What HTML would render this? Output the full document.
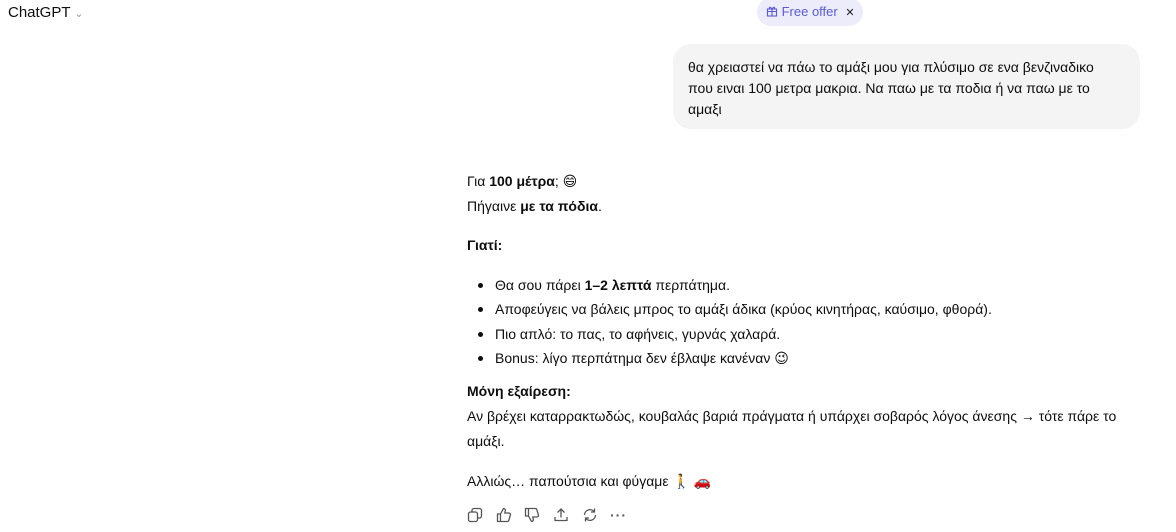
<!DOCTYPE html>
<html><head><meta charset="utf-8"><style>
body{margin:0;width:1176px;height:532px;background:#fff;font-family:"Liberation Sans","DejaVu Sans",sans-serif;color:#0d0d0d;position:relative;overflow:hidden;font-size:14px}
.a{position:absolute;white-space:nowrap;line-height:20px}
b{font-weight:700}
.bul{position:absolute;left:478px;width:5px;height:5px;border-radius:50%;background:#0d0d0d}
.ic{position:absolute;top:507px}
</style></head><body>
<div class="a" style="left:8px;top:2px;font-size:15px;line-height:22px">ChatGPT <span style="color:#999;font-size:11px">&#8964;</span></div>
<div style="position:absolute;left:757px;top:-2px;width:106px;height:28px;border-radius:14px;background:#ececfb;"></div>
<div class="a" style="left:766px;top:2px;color:#5b5bd6;font-size:13px"><svg width="12" height="12" viewBox="0 0 12 12" style="vertical-align:-1px" fill="none" stroke="#5b5bd6" stroke-width="1.1"><rect x="1.5" y="4" width="9" height="7"/><path d="M1.5 6.5h9M6 4v7M6 4C4 1 2.5 2.5 4 4M6 4c2-3 3.5-1.5 2 0"/></svg> Free offer <span style="color:#222;margin-left:4px;font-size:11px">✕</span></div>
<div style="position:absolute;left:673px;top:44px;width:467px;height:85px;border-radius:18px;background:#f4f4f4"></div>
<div class="a" style="left:688px;top:57px;line-height:21px">θα χρειαστεί να πάω το αμάξι μου για πλύσιμο σε ενα βενζιναδικο<br>που ειναι 100 μετρα μακρια. Να παω με τα ποδια ή να παω με το<br>αμαξι</div>
<div class="a" style="left:467px;top:171px">Για <b>100 μέτρα</b>; 😄</div>
<div class="a" style="left:467px;top:196px">Πήγαινε <b>με τα πόδια</b>.</div>
<div class="a" style="left:467px;top:235px"><b>Γιατί:</b></div>
<div class="bul" style="top:283px"></div><div class="a" style="left:495px;top:275px">Θα σου πάρει <b>1–2 λεπτά</b> περπάτημα.</div>
<div class="bul" style="top:307px"></div><div class="a" style="left:495px;top:299px">Αποφεύγεις να βάλεις μπρος το αμάξι άδικα (κρύος κινητήρας, καύσιμο, φθορά).</div>
<div class="bul" style="top:332px"></div><div class="a" style="left:495px;top:324px">Πιο απλό: το πας, το αφήνεις, γυρνάς χαλαρά.</div>
<div class="bul" style="top:356px"></div><div class="a" style="left:495px;top:348px">Bonus: λίγο περπάτημα δεν έβλαψε κανέναν 😉</div>
<div class="a" style="left:467px;top:381px"><b>Μόνη εξαίρεση:</b></div>
<div class="a" style="left:467px;top:406px">Αν βρέχει καταρρακτωδώς, κουβαλάς βαριά πράγματα ή υπάρχει σοβαρός λόγος άνεσης → τότε πάρε το</div>
<div class="a" style="left:467px;top:431px">αμάξι.</div>
<div class="a" style="left:467px;top:471px">Αλλιώς… παπούτσια και φύγαμε 🚶 🚗</div>
<svg class="ic" style="left:467px" width="16" height="16" viewBox="0 0 16 16" fill="none" stroke="#555" stroke-width="1.3"><rect x="1.5" y="5" width="9" height="9.5" rx="2"/><path d="M5 5V3.5a2 2 0 0 1 2-2h5.5a2 2 0 0 1 2 2V9a2 2 0 0 1-2 2H10.5"/></svg>
<svg class="ic" style="left:496px" width="16" height="16" viewBox="0 0 16 16" fill="none" stroke="#555" stroke-width="1.3"><path d="M1.5 7h3v7.5h-3zM4.5 7l3-5.5c1.2 0 2 .8 1.8 2L8.8 6H13a1.5 1.5 0 0 1 1.4 1.9l-1.6 5.5a1.5 1.5 0 0 1-1.4 1.1H4.5"/></svg>
<svg class="ic" style="left:524px" width="16" height="16" viewBox="0 0 16 16" fill="none" stroke="#555" stroke-width="1.3"><path d="M1.5 9h3V1.5h-3zM4.5 9l3 5.5c1.2 0 2-.8 1.8-2L8.8 10H13a1.5 1.5 0 0 0 1.4-1.9L12.8 2.6a1.5 1.5 0 0 0-1.4-1.1H4.5"/></svg>
<svg class="ic" style="left:553px" width="16" height="16" viewBox="0 0 16 16" fill="none" stroke="#555" stroke-width="1.3"><path d="M8 10.5V2M4.5 5.5L8 2l3.5 3.5M2 10v3.5h12V10"/></svg>
<svg class="ic" style="left:582px" width="16" height="16" viewBox="0 0 16 16" fill="none" stroke="#555" stroke-width="1.3"><path d="M2.5 8a5.5 5.5 0 0 1 10-3M13.5 8a5.5 5.5 0 0 1-10 3M12.5 1.5V5H9M3.5 14.5V11H7"/></svg>
<div class="a" style="left:610px;top:505px;color:#555;font-weight:bold;letter-spacing:1px">···</div>
</body></html>
